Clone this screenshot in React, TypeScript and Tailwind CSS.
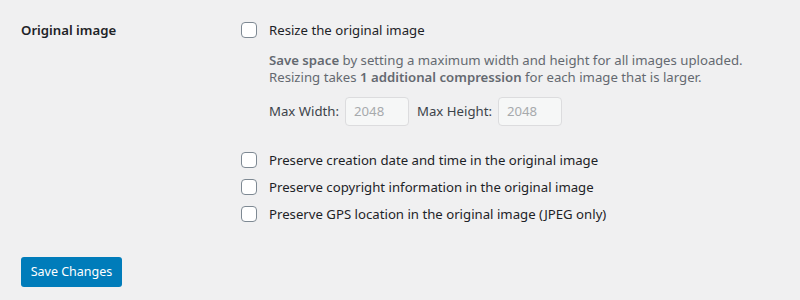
import React from "react";

const font = { fontFamily: '"Segoe UI", "Noto Sans", "Open Sans", sans-serif' };

function Box() {
  return (
    <span className="inline-block w-4 h-4 shrink-0 rounded-[4px] border border-[#7e8993] bg-white" />
  );
}

function Row({ children }: { children: React.ReactNode }) {
  return (
    <div className="flex items-center gap-3 h-[16px]">
      <Box />
      <span className="text-[13.2px] text-[#1d2327] leading-[16px]">{children}</span>
    </div>
  );
}

export default function App() {
  return (
    <div className="w-[800px] h-[300px] bg-[#f0f0f1] pl-[21px] pt-[22px]" style={font}>
      <div className="flex">
        <div className="w-[220px] text-[13.2px] font-semibold text-[#1d2327] leading-[16px]">Original image</div>
        <div className="flex flex-col">
          <Row>Resize the original image</Row>
          <div className="ml-[28px] mt-[14px] text-[13.2px] leading-[17px] text-[#646970]">
            <p>
              <b className="font-semibold">Save space</b> by setting a maximum width and height for all images uploaded.
            </p>
            <p>
              Resizing takes <b className="font-semibold">1 additional compression</b> for each image that is larger.
            </p>
          </div>
          <div className="ml-[28px] mt-[11px] flex items-center text-[13.2px] text-[#3c434a]">
            <span>Max Width:</span>
            <span className="ml-[6px] w-[64px] h-[29px] rounded-[4px] border border-[#dcdcde] bg-[#f6f7f7] text-[#a7aaad] pl-[8px] flex items-center">2048</span>
            <span className="ml-[8px]">Max Height:</span>
            <span className="ml-[6px] w-[64px] h-[29px] rounded-[4px] border border-[#dcdcde] bg-[#f6f7f7] text-[#a7aaad] pl-[8px] flex items-center">2048</span>
          </div>
          <div className="mt-[26px] flex flex-col gap-[11px]">
            <Row>Preserve creation date and time in the original image</Row>
            <Row>Preserve copyright information in the original image</Row>
            <Row>Preserve GPS location in the original image (JPEG only)</Row>
          </div>
        </div>
      </div>
      <button className="mt-[35px] w-[101px] h-[30px] rounded-[3px] bg-[#007cba] text-white text-[12.5px]">Save Changes</button>
    </div>
  );
}
